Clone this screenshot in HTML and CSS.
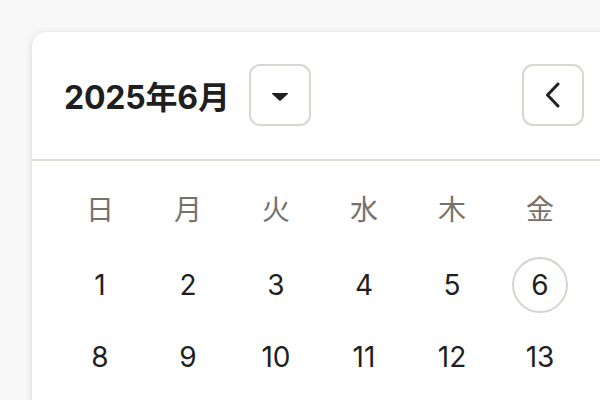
FILE: index.html
```html
<!DOCTYPE html>
<html lang="ja">
<head>
<meta charset="utf-8">
<link rel="stylesheet" href="styles.css">
</head>
<body>
<div class="card">
  <div class="header">
    <div class="title">2025年6月</div>
    <button class="btn dropdown" aria-label="月を選択">
      <svg width="18" height="10" viewBox="0 0 18 10"><path d="M1.5 1 H16.5 Q17.6 1 16.8 1.9 L9.8 8.6 Q9 9.3 8.2 8.6 L1.2 1.9 Q0.4 1 1.5 1 Z" fill="#1f1f1f"/></svg>
    </button>
    <div class="spacer"></div>
    <button class="btn nav" aria-label="前の月">
      <svg width="16" height="26" viewBox="0 0 16 26"><path d="M13 2 L2.5 13 L13 24" fill="none" stroke="#1f1f1f" stroke-width="3" stroke-linecap="round" stroke-linejoin="round"/></svg>
    </button>
    <button class="btn nav" aria-label="次の月">
      <svg width="16" height="26" viewBox="0 0 16 26"><path d="M3 2 L13.5 13 L3 24" fill="none" stroke="#1f1f1f" stroke-width="3" stroke-linecap="round" stroke-linejoin="round"/></svg>
    </button>
  </div>
  <div class="body">
    <div class="weekdays">
      <div>日</div><div>月</div><div>火</div><div>水</div><div>木</div><div>金</div><div>土</div>
    </div>
    <div class="days">
      <div class="day">1</div><div class="day">2</div><div class="day">3</div><div class="day">4</div><div class="day">5</div><div class="day today">6</div><div class="day">7</div>
      <div class="day">8</div><div class="day">9</div><div class="day">10</div><div class="day">11</div><div class="day">12</div><div class="day">13</div><div class="day">14</div>
      <div class="day">15</div><div class="day">16</div><div class="day">17</div><div class="day">18</div><div class="day">19</div><div class="day">20</div><div class="day">21</div>
    </div>
  </div>
</div>
</body>
</html>
```
FILE: styles.css
```css
html, body {
  margin: 0;
  padding: 0;
  width: 600px;
  height: 400px;
  overflow: hidden;
  background: #f8f8f8;
}
body {
  font-family: Inter, "Noto Sans CJK JP", sans-serif;
  color: #1f1f1f;
}
.card {
  margin: 32px 0 0 32px;
  width: 664px;
  background: #ffffff;
  border-radius: 13px;
  box-shadow: 0 2px 10px rgba(0, 0, 0, 0.12), 0 0 1px rgba(0, 0, 0, 0.15);
}
.header {
  display: flex;
  align-items: center;
  padding: 32px 32px 33px 32px;
  border-bottom: 2px solid #dcd9d5;
}
.title {
  font-size: 32px;
  font-weight: 700;
  letter-spacing: -0.2px;
  margin-right: 19px;
}
.spacer {
  flex: 1;
}
.btn {
  width: 62px;
  height: 62px;
  box-sizing: border-box;
  border: 2px solid #d9d6d2;
  border-radius: 11px;
  background: #ffffff;
  display: flex;
  align-items: center;
  justify-content: center;
  padding: 0;
}
.dropdown svg {
  margin-top: 3px;
}
.nav + .nav {
  margin-left: 18px;
}
.body {
  padding: 29px 24px 24px 24px;
}
.weekdays {
  display: grid;
  grid-template-columns: repeat(7, 88px);
  height: 40px;
  line-height: 40px;
  text-align: center;
  font-size: 28px;
  color: #74726b;
}
.days {
  display: grid;
  grid-template-columns: repeat(7, 88px);
  grid-auto-rows: 56px;
  row-gap: 16px;
  margin-top: 27px;
}
.day {
  display: flex;
  align-items: center;
  justify-content: center;
  font-size: 28px;
}
.today {
  width: 56px;
  height: 56px;
  box-sizing: border-box;
  justify-self: center;
  border: 2px solid #d6d3cf;
  border-radius: 50%;
}
```
